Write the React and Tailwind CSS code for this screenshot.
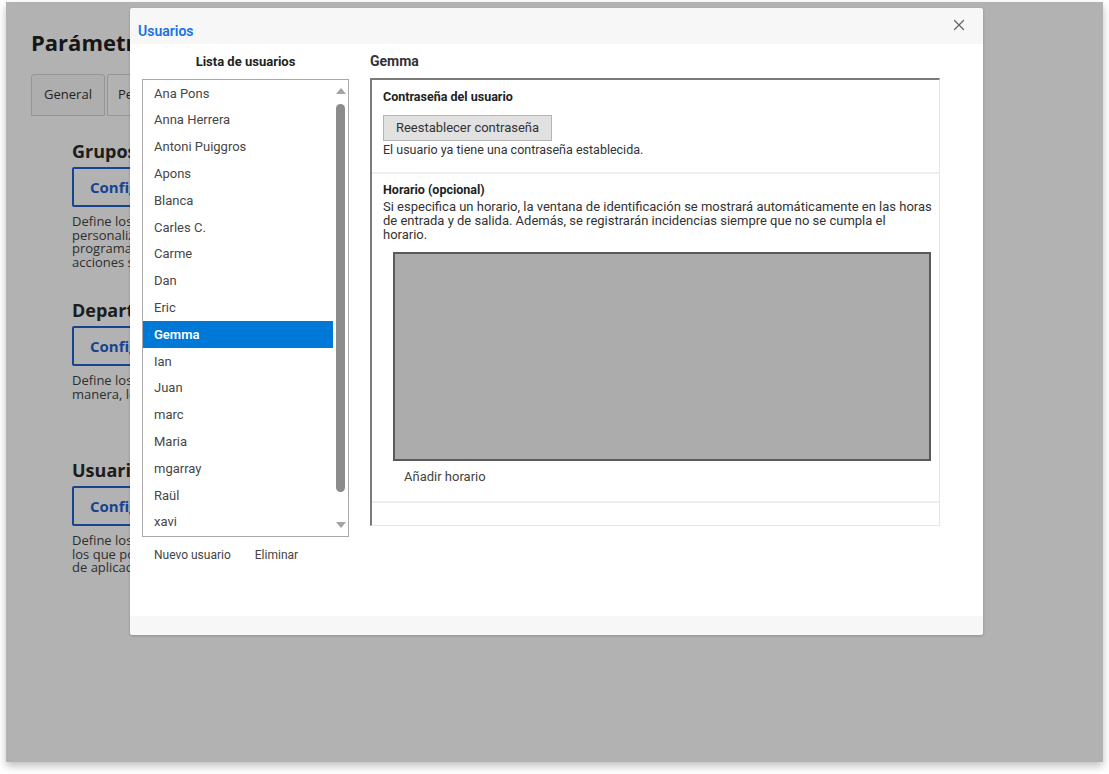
import { X } from "lucide-react";

const users = [
  "Ana Pons",
  "Anna Herrera",
  "Antoni Puiggros",
  "Apons",
  "Blanca",
  "Carles C.",
  "Carme",
  "Dan",
  "Eric",
  "Gemma",
  "Ian",
  "Juan",
  "marc",
  "Maria",
  "mgarray",
  "Raül",
  "xavi",
];

function BackgroundSection({ title, lines, className }) {
  return (
    <div className={className}>
      <h2 className="whitespace-nowrap text-[18px] font-bold leading-6 text-[#2a2a2a]">{title}</h2>
      <button className="mt-[4px] flex h-[40px] w-[220px] items-center rounded-[2px] border-2 border-[#1f62d0] px-4 text-[15px] font-bold text-[#1f62d0]">
        Configurar
      </button>
      <p className="mt-[8px] w-[300px] text-[13px] leading-[13.5px] text-[#444]">
        {lines.map((line) => (
          <span key={line} className="block whitespace-nowrap">
            {line}
          </span>
        ))}
      </p>
    </div>
  );
}

function UserList({ selected }) {
  return (
    <div className="flex h-[458px] border border-[#a9a9a9] bg-white">
      <ul className="flex-1 overflow-hidden">
        {users.map((name) => (
          <li
            key={name}
            className={
              name === selected
                ? "flex h-[26.8px] items-center bg-[#0078d7] pl-[11px] text-[13px] font-semibold text-white"
                : "flex h-[26.8px] items-center pl-[11px] text-[13px] text-[#474747]"
            }
          >
            {name}
          </li>
        ))}
      </ul>
      <div className="flex w-[15px] flex-col items-center py-[8px]">
        <div className="h-0 w-0 border-x-[5px] border-b-[6px] border-x-transparent border-b-[#a3a3a3]" />
        <div className="mt-[10px] h-[388px] w-[9px] rounded-full bg-[#8c8c8c]" />
        <div className="flex-1" />
        <div className="h-0 w-0 border-x-[5px] border-t-[6px] border-x-transparent border-t-[#a3a3a3]" />
      </div>
    </div>
  );
}

function UserDetail({ name }) {
  return (
    <div className="w-[570px]">
      <h3 className="h-[34px] pt-[7px] text-[14px] font-bold text-[#333]">{name}</h3>
      <div className="h-[448px] border-l-2 border-t-2 border-r border-b border-l-[#7a7a7a] border-t-[#7a7a7a] border-r-[#e6e6e6] border-b-[#e6e6e6]">
        <section className="border-b-2 border-[#eeeeee] px-[11px] pb-[14px] pt-[9px]">
          <h4 className="text-[12.5px] font-bold leading-4 text-[#222]">Contraseña del usuario</h4>
          <button className="mt-[10px] h-[26px] w-[169px] border border-[#b5b5b5] bg-[#e1e1e1] text-[13px] text-[#333]">
            Reestablecer contraseña
          </button>
          <p className="mt-px text-[12.5px] leading-4 text-[#333]">El usuario ya tiene una contraseña establecida.</p>
        </section>
        <section className="border-b-2 border-[#eeeeee] pb-[13px] pl-[11px] pt-[8px]">
          <h4 className="text-[12.5px] font-bold leading-4 text-[#222]">Horario (opcional)</h4>
          <p className="mt-[2px] text-[13px] leading-[13.8px] text-[#333]">
            Si especifica un horario, la ventana de identificación se mostrará automáticamente en las horas de entrada y de salida. Además, se registrarán incidencias siempre que no se cumpla el
            <br />
            horario.
          </p>
          <div className="ml-[10px] mt-[11px] h-[209px] w-[538px] border-2 border-[#5a5a5a] bg-[#acacac]" />
          <button className="ml-[21px] mt-[6px] text-[13px] text-[#444]">Añadir horario</button>
        </section>
      </div>
    </div>
  );
}

export default function App() {
  return (
    <div className="h-[774px] w-[1109px] bg-white pl-[6px] pt-[2px] font-['Roboto',sans-serif]">
      <div className="relative h-[760px] w-[1097px] overflow-hidden bg-white shadow-[0_4px_8px_rgba(0,0,0,0.25)]">
        {/* page underneath, only the part left of the dialog shows */}
        <div className="h-full w-[124px] overflow-hidden pl-[25px] pt-[26px] font-['Open_Sans',sans-serif]">
          <h1 className="whitespace-nowrap text-[22px] font-bold leading-[28px] text-[#222]">Parámetros de la aplicación</h1>
          <div className="mt-[18px] flex gap-[2px]">
            <div className="flex h-[42px] w-[74px] shrink-0 items-center justify-center rounded-t-[3px] border border-[#d6d6d6] bg-[#f9f9f9] text-[13px] text-[#333]">
              General
            </div>
            <div className="flex h-[42px] w-[110px] shrink-0 items-center rounded-t-[3px] border border-[#d6d6d6] bg-white pl-[10px] text-[13px] text-[#333]">
              Personal
            </div>
          </div>
          <BackgroundSection
            className="ml-[41px] mt-[23px]"
            title="Grupos de usuarios"
            lines={["Define los grupos", "personalizados", "programas y", "acciones sobre"]}
          />
          <BackgroundSection
            className="ml-[41px] mt-[29px]"
            title="Departamentos"
            lines={["Define los departamentos", "manera, los"]}
          />
          <BackgroundSection
            className="ml-[41px] mt-[57px]"
            title="Usuarios"
            lines={["Define los usuarios", "los que podrán", "de aplicación"]}
          />
        </div>

        {/* dimming overlay */}
        <div className="absolute inset-0 bg-black/30" />

        {/* dialog */}
        <div className="absolute left-[124px] top-[6px] flex h-[627px] w-[853px] flex-col overflow-hidden rounded-[3px] bg-white shadow-[0_1px_3px_rgba(0,0,0,0.2)]">
          <div className="flex h-[36px] items-center justify-between bg-[#f7f7f7] pl-[8px] pr-[15px]">
            <span className="pt-[10px] text-[14px] font-semibold text-[#1572e8]">Usuarios</span>
            <X size={18} strokeWidth={1.6} className="-mt-[2px] text-[#666]" />
          </div>
          <div className="flex flex-1 gap-[21px] px-[12px]">
            <div className="w-[207px]">
              <h3 className="h-[35px] pt-[8px] text-center text-[13px] font-bold text-[#222]">Lista de usuarios</h3>
              <UserList selected="Gemma" />
              <div className="mt-[9px] flex gap-[24px] pl-[12px] text-[12px] text-[#444]">
                <button>Nuevo usuario</button>
                <button>Eliminar</button>
              </div>
            </div>
            <UserDetail name="Gemma" />
          </div>
          <div className="h-[19px] bg-[#f7f7f7]" />
        </div>
      </div>
    </div>
  );
}
